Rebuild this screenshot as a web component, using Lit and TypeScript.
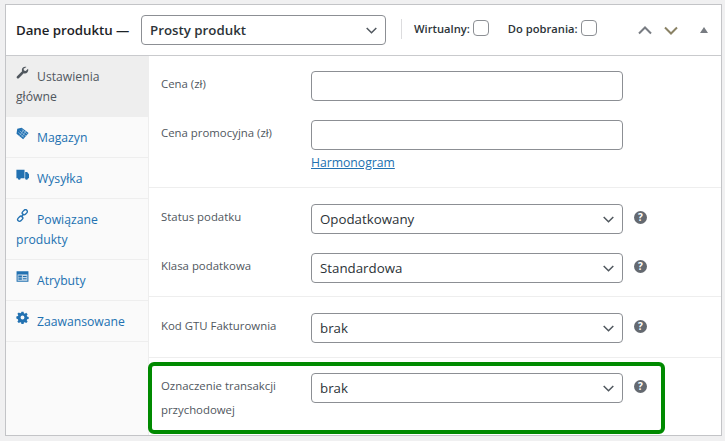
import { LitElement, html, css, svg } from "lit";
import { customElement } from "lit/decorators.js";

const icons: Record<string, unknown> = {
  wrench: svg`<path d="M12.9 1.2c-1.6-.6-3.5-.2-4.6 1.1-1.100 1.200-1.400 2.900-.8 4.300L1.300 12.700c-.7.700-.7 1.700 0 2.300.6.600 1.600.600 2.200 0l6-6.200c1.500.6 3.300.3 4.400-.9 1.200-1.200 1.500-3 .9-4.500l-2.800 2.700-2.200-.6-.5-2z"/>`,
  tag: svg`<path d="M7 .8 15.500 7.500 8.800 15.200.6 8.300 1.600 2.300z"/><path d="M4.500 4.700 12.500 11.300M7 3 14 8.800M3 6.700 10 12.800M9.500 3.500 4.500 10.500M12 5 7 12.500" stroke="#a9cbe6" stroke-width=".8" fill="none"/>`,
  truck: svg`<path d="M.5 2h10v10.500H.5zM11.300 4.800h2.400L16 7.800v4.700h-4.700z"/><circle cx="4" cy="12.800" r="1.600"/><circle cx="13" cy="12.800" r="1.600"/>`,
  link: svg`<g fill="none" stroke="currentColor" stroke-width="1.700"><rect x="7.300" y="1.700" width="7" height="4.600" rx="2.300" transform="rotate(-45 10.800 4)"/><rect x="1.700" y="9.700" width="7" height="4.600" rx="2.300" transform="rotate(-45 5.200 12)"/><path d="M6 10 10 6"/></g>`,
  card: svg`<path fill-rule="evenodd" d="M.7 1.500h14.600v13H.7zM2 5.500v7.700h12V5.500zM3 6.800h4.200v2.500H3zM3 10h4.200v2H3zM8.500 7.300h4.500v1.200H8.500zM8.500 10.300h4.500v1.200H8.500z"/><path d="M3.400 7.600h3.300v1H3.400z" fill-opacity=".6"/><rect x="2" y="5.500" width="12" height="7.700" fill-opacity=".25"/>`,
  gear: svg`<path fill-rule="evenodd" d="M6.700 1h2.600l.4 1.900 1.200.5 1.600-1.100 1.800 1.800-1.100 1.600.5 1.200 1.900.4v2.600l-1.900.4-.5 1.200 1.100 1.600-1.800 1.800-1.600-1.100-1.200.5-.4 1.900H6.700l-.4-1.900-1.200-.5-1.600 1.100-1.800-1.800 1.100-1.600-.5-1.200L.4 9.300V6.700l1.900-.4.5-1.200-1.100-1.600 1.800-1.800 1.600 1.100 1.200-.5zM8 5.600a2.400 2.400 0 1 0 0 4.800 2.400 2.400 0 0 0 0-4.800z"/>`,
};

const tabs = [
  { icon: "wrench", text: "Ustawienia główne", active: true, h: 61 },
  { icon: "tag", text: "Magazyn", h: 41 },
  { icon: "truck", text: "Wysyłka", h: 41 },
  { icon: "link", text: "Powiązane produkty", h: 61 },
  { icon: "card", text: "Atrybuty", h: 41 },
  { icon: "gear", text: "Zaawansowane", h: 41 },
];

const chev = html`<svg class="chev" viewBox="0 0 11 7" width="11" height="7"><path d="M.7 1 5.500 5.800 10.300 1" fill="none" stroke="currentColor" stroke-width="1.500"/></svg>`;
const help = html`<span class="help">?</span>`;

@customElement("app-root")
export class AppRoot extends LitElement {
  static styles = css`
    :host { display: block; width: 725px; height: 441px; background: #f0f0f1; overflow: hidden;
      font-family: "Open Sans", "Noto Sans", sans-serif; color: #3c434a; box-sizing: border-box; padding: 4px 3px 0 5px; }
    * { box-sizing: border-box; }
    .card { position: relative; width: 717px; height: 432px; background: #fff; border: 1px solid #c3c4c7; }
    .head { height: 51px; border-bottom: 1px solid #c9cacd; display: flex; align-items: center; padding: 0 0 0 10px; }
    .title { font-size: 13.300px; font-weight: 600; color: #1d2327; letter-spacing: -.05px; width: 125px; flex: none; white-space: nowrap; margin-top: -1px; }
    .sel { display: flex; align-items: center; justify-content: space-between; border: 1px solid #8c8f94; border-radius: 4px; color: #2c3338; background: #fff; }
    .prod { width: 245px; height: 30px; padding: 0 8px 0 8px; font-size: 13.300px; font-weight: 600; flex: none; }
    .chev { color: #50575e; flex: none; }
    .vsep { width: 1px; height: 20px; background: #dcdcde; margin: -3px 12px 0 15px; flex: none; }
    .check { display: flex; align-items: center; font-size: 11.200px; font-weight: 600; color: #2c3338; white-space: nowrap; margin-top: -4px; }
    .box { width: 16px; height: 16px; border: 1px solid #8c8f94; border-radius: 4px; margin: 0 0 0 3px; flex: none; }
    .c2 { margin-left: 19px; }
    .arrows { display: flex; align-items: center; margin-left: 41px; gap: 12px; margin-top: 0; }
    .tri { width: 0; height: 0; border: 4px solid transparent; border-top: 0; border-bottom: 6px solid #787c82; margin-left: 10px; }
    .up { color: #787c82; } .down { color: #8a8265; }
    .body { display: flex; height: 379px; }
    .side { width: 143px; flex: none; background: #fafafa; border-right: 1px solid #eee; }
    .tab { border-bottom: 1px solid #eee; padding: 10px 10px 0; font-size: 12.200px; line-height: 20.300px; color: #2271b1; }
    .tab.active { background: #eee; color: #50575e; border-bottom: 0; }
    .tab svg { width: 13px; height: 13px; margin-right: 8px; fill: currentColor; vertical-align: 2px; color: #2271b1; }
    .tab.active svg { color: #50575e; }
    .main { flex: 1; min-width: 0; }
    .sec { border-bottom: 1px solid #eee; padding: 15px 12px 0; display: flex; flex-direction: column; }
    .row { display: flex; align-items: flex-start; }
    .lab { width: 150px; flex: none; font-size: 11.400px; line-height: 24px; color: #50575e; padding-top: 1px; }
    .inp { width: 312px; height: 30px; flex: none; }
    .val { padding: 0 8px 0 8px; font-size: 13.300px; flex: none; }
    .link { display: block; color: #2271b1; text-decoration: underline; font-size: 12.200px; margin: 4px 0 0 150px; line-height: 17px; }
    .help { width: 13px; height: 13px; border-radius: 50%; background: #646970; color: #fff; font-size: 10px; font-weight: 700; line-height: 13px; text-align: center; flex: none; margin: 7px 0 0 11px; }
    .mark { position: absolute; left: 142px; top: 357px; width: 517px; height: 72px; border: 4px solid #008a00; border-radius: 6px; }
  `;

  row(label: string, value: string | null, gap = 0, withHelp = true) {
    return html`<div class="row" style="margin-top:${gap}px">
      <span class="lab">${label}</span>
      ${value === null
        ? html`<div class="sel inp"></div>`
        : html`<div class="sel inp val"><span>${value}</span>${chev}</div>`}
      ${withHelp ? help : ""}
    </div>`;
  }

  render() {
    return html`<div class="card">
      <div class="head">
        <span class="title">Dane produktu —</span>
        <div class="sel prod"><span>Prosty produkt</span>${chev}</div>
        <span class="vsep"></span>
        <label class="check">Wirtualny:<span class="box"></span></label>
        <label class="check c2">Do pobrania:<span class="box"></span></label>
        <span class="arrows">
          <svg class="up" viewBox="0 0 14 9" width="14" height="9"><path d="M1 7.500 7 1.500 13 7.500" fill="none" stroke="currentColor" stroke-width="2"/></svg>
          <svg class="down" viewBox="0 0 14 9" width="14" height="9"><path d="M1 1.500 7 7.500 13 1.500" fill="none" stroke="currentColor" stroke-width="2"/></svg>
          <span class="tri"></span>
        </span>
      </div>
      <div class="body">
        <div class="side">
          ${tabs.map(
            (t) => html`<div class="tab ${t.active ? "active" : ""}" style="height:${t.h}px"><svg viewBox="0 0 16 16">${icons[t.icon]}</svg>${t.text}</div>`
          )}
        </div>
        <div class="main">
          <div class="sec" style="height:132px">
            ${this.row("Cena (zł)", null, 0, false)}
            ${this.row("Cena promocyjna (zł)", null, 19, false)}
            <a class="link">Harmonogram</a>
          </div>
          <div class="sec" style="height:109px;padding-top:16px">
            ${this.row("Status podatku", "Opodatkowany")}
            ${this.row("Klasa podatkowa", "Standardowa", 19)}
          </div>
          <div class="sec" style="height:61px;padding-top:16px">
            ${this.row("Kod GTU Fakturownia", "brak")}
          </div>
          <div class="sec" style="height:77px;border:0">
            ${this.row("Oznaczenie transakcji przychodowej", "brak")}
          </div>
        </div>
      </div>
      <div class="mark"></div>
    </div>`;
  }
}
